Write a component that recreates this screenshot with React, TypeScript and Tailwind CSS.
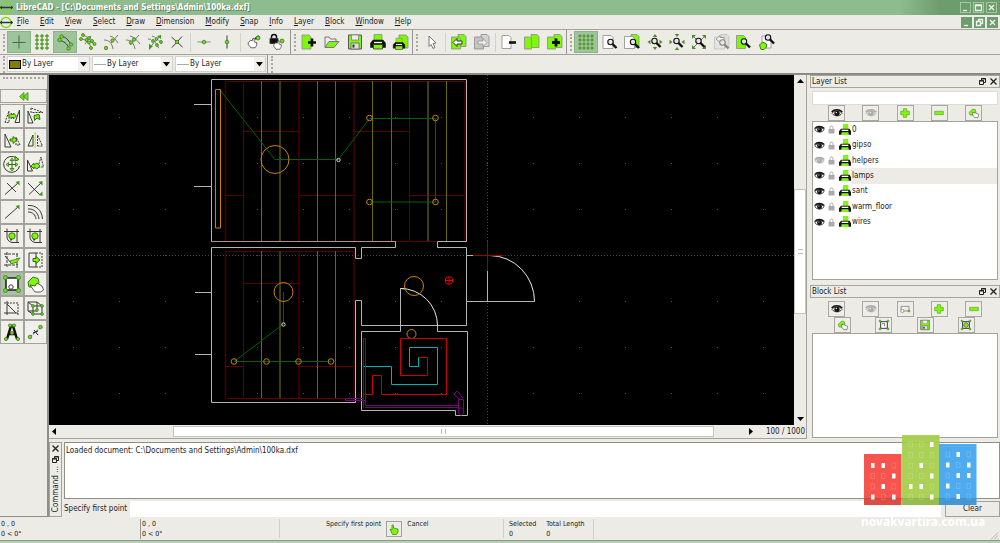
import type { ReactNode } from "react";

const G = "#7ff60a";
const D = "#3a3a3a";

/* ---------- small drawing helpers ---------- */

function Svg({ children, size = 18 }: { children: ReactNode; size?: number }) {
  return (
    <svg width={size} height={size} viewBox="0 0 18 18" fill="none" stroke={D} strokeWidth="1" aria-hidden="true" className="shrink-0">
      {children}
    </svg>
  );
}

function Nodes({ at, r = 1.5 }: { at: number[][]; r?: number }) {
  return (
    <g fill="#74d81c" stroke="#3f7a22" strokeWidth="0.8">
      {at.map(([x, y]) => (
        <circle key={`${x}-${y}`} cx={x} cy={y} r={r} />
      ))}
    </g>
  );
}

function Lens({ x, y }: { x: number; y: number }) {
  return (
    <g stroke="#111">
      <circle cx={x} cy={y} r="2.7" fill="#e6e6e6" strokeWidth="1.1" />
      <path d={`M${x + 2} ${y + 2}l4 4`} strokeWidth="2.4" />
    </g>
  );
}

function Page({ x, y, w = 8, h = 12, fill = "#fff" }: { x: number; y: number; w?: number; h?: number; fill?: string }) {
  return <path d={`M${x} ${y}h${w - 2}l2 2v${h - 2}h${-w}z`} fill={fill} stroke="#8c8c8c" strokeWidth="0.8" />;
}

const dots3x4 = [3, 7, 11, 15].flatMap((y) => [4, 9, 14].map((x) => [x, y]));
const dots4x5 = [3, 7, 11, 15].flatMap((y) => [3, 7, 11, 15].map((x) => [x, y]));

const printer = (
  <>
    <path d="M5 1.500h8v6H5z" fill={G} stroke="#777" strokeWidth="0.600" />
    <path d="M4 7h10l2.500 3v4.500h-3V12h-9v2.500h-3V10z" fill="#111" stroke="#111" strokeWidth="0.500" />
    <path d="M5 9.500h8" stroke="#fff" strokeWidth="1.300" />
    <path d="M4.500 11.500h9v4.500h-9z" fill={G} stroke="#333" strokeWidth="0.800" />
  </>
);

const layerPrinter = (
  <>
    <path d="M6 0h8v8H6z" fill={G} stroke="none" />
    <path d="M3 7h13l2 4v5h-4v-3H4v3H0v-5z" fill="#111" stroke="none" />
    <path d="M4 8.500h10v2H4z" fill="#fff" stroke="none" />
    <path d="M4 12.500h10v4H4z" fill={G} stroke="none" />
  </>
);

const eye = (c: string) => (
  <>
    <path d="M1.5 9.5C4 5 13 4 16.5 9.500C13 14.500 5 14.500 1.500 9.500z" fill={c === "#111" ? "#fff" : "#ddd"} stroke={c} strokeWidth="1.2" />
    <path d="M1 7.500C5 3 12 3 17 7.500" stroke={c} strokeWidth="2.200" />
    <circle cx="9" cy="9.500" r="4" fill={c} stroke="none" />
    <circle cx="8" cy="8.200" r="1" fill="#fff" stroke="none" />
  </>
);

const hand = (
  <path d="M5 9l3-3 1.500 1 1-3 1.500 0v4l3 1v3l-2 3H8l-3-4z" fill="#fff" stroke="#222" strokeWidth="0.8" />
);

const paint = (
  <>
    <path d="M2 8l5-5 4 1 1 4-3 4H3z" fill={G} stroke="#3b7f12" strokeWidth="0.8" />
    <path d="M7 8l4 1 5 2-1 5H10l-3-4z" fill="#fff" stroke="#333" strokeWidth="0.8" />
  </>
);

const plus = <path d="M6.500 2.500h5v4h4v5h-4v4h-5v-4h-4v-5h4z" fill={G} stroke="#5aa52a" />;
const minus = <path d="M2.500 6.500h13v5h-13z" fill={G} stroke="#5aa52a" />;
const floppy = (
  <>
    <path d="M2.500 2h13v14h-13z" fill={G} stroke="#555" />
    <path d="M5.500 2h7v5h-7z" fill="#eee" stroke="#777" strokeWidth="0.700" />
    <path d="M5 10h8v6H5z" fill="#ddd" stroke="#555" strokeWidth="0.700" />
    <path d="M6.500 11.500h2v3h-2z" fill="#333" stroke="none" />
  </>
);
const frame = (
  <>
    <path d="M4 4h10v10H4z" fill="#fff" strokeWidth="1.500" />
    <Nodes at={[[3, 3], [15, 3], [3, 15], [15, 15]]} />
  </>
);

const arrowsOut = (
  <path d="M9 1l2.200 3H6.800zM9 17l2.200-3H6.800zM1.500 9l3-2.200v4.400zM16.500 9l-3-2.200v4.400z" fill="#4c8f1e" stroke="none" />
);
const arrowsIn = (
  <path d="M9 4l2.200-3H6.800zM9 14l2.200 3H6.800zM4.500 9l-3-2.200v4.400zM13.500 9l3-2.200v4.400z" fill="#4c8f1e" stroke="none" />
);
const arrowsDiag = <path d="M2 2h4L2 6zM16 2v4l-4-4zM2 16v-4l4 4zM16 16h-4l4-4z" fill="#4c8f1e" stroke="none" />;

type Tool = { label: string; icon: ReactNode; on?: boolean };

const snapTools: Tool[] = [
  { label: "Free Snap", on: true, icon: <path d="M9 2.500v13M2.500 9.500h13" stroke="#4a6a48" /> },
  { label: "Snap on grid", icon: <Nodes at={dots3x4} r={1.300} /> },
  {
    label: "Snap on Endpoints",
    on: true,
    icon: (
      <>
        <path d="M5.500 3.500C10 4 12 6.500 14.500 11M3.500 7.500C8 8 11 11 13 15" />
        <Nodes at={[[5.500, 3.500], [3.500, 7], [15, 11.500], [12.500, 15.500]]} r={1.700} />
      </>
    ),
  },
  {
    label: "Snap on Entity",
    icon: (
      <>
        <path d="M3 2c5 1 10 5 12 10M2 6c5 0 9 4 10 9M6 11l6-8" stroke="#777" />
        <Nodes at={[[4, 2], [2, 6], [7.500, 7], [10, 5], [10, 9.500], [13, 8], [15.500, 11], [12, 15]]} />
      </>
    ),
  },
  {
    label: "Snap Center",
    icon: (
      <>
        <path d="M2 7c5 0 8 3 9 9M8 3c4 1 6 4 8 7M9 10l7-8" stroke="#777" />
        <Nodes at={[[4, 15], [10.500, 7.500]]} r={1.700} />
      </>
    ),
  },
  {
    label: "Snap Middle",
    icon: (
      <>
        <path d="M2 7c5 0 8 3 9 9M6 3c4 1 7 4 10 8M6 12l9-10" stroke="#777" />
        <Nodes at={[[10, 6.500], [7, 9.500]]} r={1.700} />
      </>
    ),
  },
  {
    label: "Snap Distance",
    icon: (
      <>
        <path d="M2 6c5 0 9 4 11 10M6 3c4 1 7 4 10 8M6 12l9-10" stroke="#777" strokeDasharray="3 1" />
        <path d="M15 2v4l-4-3zM3 11l4 2-4 4z" fill="#3f9a14" stroke="none" />
        <Nodes at={[[7, 8], [10.500, 6], [11, 12], [15, 9]]} r={1.400} />
      </>
    ),
  },
  {
    label: "Snap Intersection",
    icon: (
      <>
        <path d="M3.500 4l11 10M4 14.500l10-11" />
        <Nodes at={[[9, 9]]} r={1.700} />
      </>
    ),
  },
];
const restrictTools: Tool[] = [
  { label: "Restrict Horizontal", icon: <><path d="M2.500 9h13" stroke="#888" /><Nodes at={[[9, 9]]} r={1.800} /></> },
  { label: "Restrict Vertical", icon: <><path d="M9 2.500v13" /><Nodes at={[[9, 9]]} r={1.800} /></> },
];
const zeroTools: Tool[] = [
  { label: "Set Relative Zero", icon: <><path d="M10 6l4-3" stroke="#222" strokeWidth="2" /><Nodes at={[[13, 5]]} r={2} /><g transform="translate(-1 2) scale(.85)">{hand}</g></> },
  {
    label: "Lock Relative Zero",
    icon: (
      <>
        <path d="M3.500 5V4a2.500 2.500 0 015 0v2" stroke="#111" strokeWidth="1.500" />
        <path d="M2 5.500h8v5H2z" fill="#111" />
        <Nodes at={[[14, 8]]} r={2} />
        <g transform="translate(2 5) scale(.75)">{hand}</g>
      </>
    ),
  },
];
const fileTools: Tool[] = [
  { label: "New", icon: <><Page x={2} y={2} w={9} h={14} fill={G} /><path d="M8 9.500h8M12 5.500v8" stroke="#111" strokeWidth="2.600" /></> },
  { label: "Open", icon: <><path d="M2 14V4h4l1.500 2H13v3" fill="#eee" stroke="#777" /><path d="M2 14.500L6 8.500h10l-5 6z" fill={G} stroke="#777" /></> },
  { label: "Save", icon: floppy },
  { label: "Print", icon: printer },
  { label: "Print Preview", icon: <><Page x={7} y={2} w={9} h={13} fill={G} /><g transform="translate(0 4) scale(.78)">{printer}</g></> },
];
const selectTools: Tool[] = [
  { label: "Selection", icon: <path d="M6 3l7 7-3 .5 2 4-2 1-2-4-2 2z" fill="#fff" stroke="#777" /> },
];
const undoTools: Tool[] = [
  { label: "Undo", icon: <><Page x={8} y={1.500} w={8} h={12} fill={G} /><Page x={1.500} y={4} w={9} h={12} fill={G} /><path d="M3 9.500l4-4v2.500h5v3H7v2.500z" fill="#fff" stroke="#222" strokeWidth="0.900" /></> },
  { label: "Redo", icon: <><Page x={8} y={1.500} w={8} h={12} fill="#d4d4d0" /><Page x={1.500} y={4} w={9} h={12} fill="#c4c4c0" /><path d="M14 9.500l-4-4v2.500H5v3h5v2.500z" fill="#eee" stroke="#999" strokeWidth="0.900" /></> },
];
const clipTools: Tool[] = [
  { label: "Cut", icon: <><Page x={2} y={2.500} w={9} h={13} /><path d="M9 9.500h7" stroke="#111" strokeWidth="2.600" /></> },
  { label: "Copy", icon: <><Page x={8} y={1.500} w={8} h={13} fill={G} /><Page x={1.500} y={4} w={7} h={12} fill={G} /></> },
  { label: "Paste", icon: <><Page x={8} y={1.500} w={8} h={13} fill={G} /><Page x={1.500} y={4} w={8} h={12} fill={G} /><path d="M6 9.500h8M10 5.500v8" stroke="#111" strokeWidth="2.800" /></> },
];
const viewTools: Tool[] = [
  { label: "Grid", on: true, icon: <Nodes at={dots4x5} r={1.100} /> },
  { label: "Redraw", icon: <><Page x={2} y={2.500} w={10} h={13} /><Lens x={9.500} y={9} /></> },
  { label: "Zoom page", icon: <><Page x={8} y={1.500} w={8} h={13} fill={G} /><Page x={1.500} y={3.500} w={10} h={12} /><Lens x={10} y={9} /></> },
  { label: "Zoom in", icon: <>{arrowsOut}<Lens x={8.500} y={8} /></> },
  { label: "Zoom out", icon: <>{arrowsIn}<Lens x={8.500} y={8} /></> },
  { label: "Auto Zoom", icon: <><path d="M3 3l12 12M15 3L3 15" stroke="#777" />{arrowsDiag}<Lens x={8.500} y={8} /></> },
  { label: "Previous View", icon: <g opacity="0.45"><Page x={8} y={1.500} w={8} h={13} fill="#ccc" /><Page x={1.500} y={4} w={10} h={12} fill="#ddd" /><path d="M3 6l4-3.500v2h4v3H7v2z" fill="#fff" /><Lens x={9.500} y={9.500} /></g> },
  { label: "Window Zoom", icon: <><Page x={1.500} y={2.500} w={9} h={13} fill={G} /><Lens x={9} y={8.500} /></> },
  { label: "Zoom Panning", icon: <><Page x={4} y={3} w={9} h={12} /><Lens x={10} y={4.500} /><path d="M1.500 12l3-3 4 2v3l-2.500 2.500h-3z" fill={G} stroke="#3b7f12" /></> },
];

const move = (
  <path d="M6 9l3-3v2l3-2 3 3-3 3-3-2v2z" fill={G} stroke="#2f6a10" strokeWidth="0.900" />
);
const bracket = <path d="M4 1.500V11c1 3 3 4.500 6 4.500M1 4.500h15M14 2v14M9 15.500h7" />;
const bevelGem = (
  <>
    <circle cx="9" cy="9" r="3.200" fill={G} stroke="#2f6a10" strokeWidth="0.900" />
    <path d="M8 12v1.500" stroke="#222" strokeWidth="1.500" />
  </>
);

const modifyTools: Tool[] = [
  { label: "Move / Copy", icon: <><path d="M2 15.500L6 4v11.500z" strokeDasharray="2 1" /><path d="M12 15.500L16.500 3v12.500z" /><path d="M5.500 9l3-3v1.500h2V6l3 3-3 3v-1.500h-2V12z" fill={G} stroke="#2f6a10" strokeWidth="0.900" /></> },
  { label: "Rotate", icon: <><path d="M2 16V4l5 12z" /><path d="M5 1v4.500h12z" strokeDasharray="2 1" /><path d="M8 8.500l5-1 1 5-3-1.500-2.500 2.500z" fill={G} stroke="#2f6a10" /></> },
  { label: "Scale", icon: <><path d="M2 16V3l6 13z" /><path d="M13 14V6l4 8z" strokeDasharray="2 1" /><path d="M7 8h3V5.500L14 9l-4 3.500V10H7z" fill={G} stroke="#2f6a10" strokeWidth="0.900" /></> },
  { label: "Mirror", icon: <><path d="M2 15h5V4z" /><path d="M11.500 15h5l-5-11z" strokeDasharray="2 1" /><path d="M9.200 1v16" stroke={G} /></> },
  { label: "Move and Rotate", icon: <><path d="M13.500 3A8 8 0 1016.500 11" /><path d="M12 1.500l4 3-4 1.500z" fill={G} stroke="#2f6a10" /><path d="M9 4v11M4 9.500h11" stroke="#2f6a10" /><path d="M9 3l2 2.500H7zM9 16l2-2.500H7zM3 9.500L5.500 7.500v4zM15 9.500l-2.500-2v4z" fill={G} stroke="#2f6a10" strokeWidth="0.700" /></> },
  { label: "Rotate Two", icon: <><path d="M1.500 16V5l5 11z" /><path d="M12 12l3-10 2.500 10z" strokeDasharray="2 1" /><g transform="translate(-1 2)">{move}</g></> },
  { label: "Trim", icon: <><path d="M2 15.500L15 4M4 4l9 9" /><path d="M16.500 2v4.500L12.500 3z" fill="#3f9a14" stroke="none" /></> },
  { label: "Trim Two", icon: <><path d="M3 15.500L15 4M2 4l12 12" /><path d="M16.500 2v4.500L12.500 3zM16.500 17v-4.500l-4 3.500z" fill="#3f9a14" stroke="none" /></> },
  { label: "Lengthen", icon: <><path d="M2 15.500L15 4" /><path d="M16.500 2v4.500L12.500 3z" fill="#3f9a14" stroke="none" /></> },
  { label: "Offset", icon: <path d="M2 2.500C10 2 16 7 16.500 16M2 6c6-.5 10 3.500 11 10M2 9c5 0 7.500 3 8 7" /> },
  { label: "Bevel", icon: <>{bracket}{bevelGem}</> },
  { label: "Fillet", icon: <>{bracket}{bevelGem}</> },
  { label: "Divide", icon: <><path d="M1 3h14M4 1v15M1 14h14M14 3v14" strokeDasharray="3 1" /><path d="M2 5l7 8" /><path d="M7 10l10-3-3 4-6 2z" fill={G} stroke="#2f6a10" strokeWidth="0.700" /></> },
  { label: "Stretch", icon: <><path d="M10 2H3v14h7z" /><path d="M10 2h6v14h-6" strokeDasharray="2 1" /><path d="M7 7.500h3v-2l4 3.500-4 3.500v-2H7z" fill={G} stroke="#2f6a10" /></> },
  { label: "Properties", on: true, icon: <><path d="M3 3h12v12H3z" fill="#fff" stroke="#222" strokeWidth="1.600" /><circle cx="8" cy="12" r="2.200" fill="#fff" /><Nodes at={[[2.500, 2.500], [15.500, 2.500], [2.500, 15.500], [15.500, 15.500]]} r={2} /></> },
  { label: "Attributes", icon: <><path d="M2 7l5-5 5 1.500 1 4-4 4.500H3z" fill={G} stroke="#3b7f12" /><path d="M4 10l5 1 2-3 5 3 1.500 4-3 2H9z" fill="#fff" stroke="#333" strokeWidth="0.800" /></> },
  { label: "Explode Text", icon: <><path d="M4 2v14M1 14h14" /><path d="M1 4h14v12" strokeDasharray="2 1" /><path d="M4 5l9 9" /></> },
  { label: "Explode", icon: <><path d="M2 3h9v9H2zM7 7h9v8H7zM2 3l5 4M11 3l5 4M2 12l5 3" /><Nodes at={[[7, 7], [16, 7], [7, 15], [16, 15], [11, 11]]} r={1.400} /></> },
  { label: "Edit Text", icon: <><path d="M4 16L8 3h2l4 13M6 11h6" stroke="#111" strokeWidth="2.500" /><Nodes at={[[7, 2.500], [11, 2.500], [3, 16], [15, 16], [9, 10]]} r={1.600} /></> },
  { label: "Block explode", icon: <><path d="M4 14l10-9" stroke="#555" strokeDasharray="3 1" /><path d="M8 7l4 5M7 10l5-2" stroke="#222" /><Nodes at={[[4, 14], [14.500, 4]]} r={1.800} /></> },
];

const menus = ["File", "Edit", "View", "Select", "Draw", "Dimension", "Modify", "Snap", "Info", "Layer", "Block", "Window", "Help"];
const layers = ["0", "gipso", "helpers", "lamps", "sant", "warm_floor", "wires"];

/* ---------- widgets ---------- */

function ToolGroup({ tools, className }: { tools: Tool[]; className: string }) {
  return (
    <div className={`flex h-[22px] ${className}`}>
      {tools.map((t) => (
        <button
          key={t.label}
          aria-label={t.label}
          className={`flex min-w-0 flex-1 items-center justify-center ${t.on ? "border border-[#8db588] bg-[#9dc49a]" : ""}`}
        >
          <Svg>{t.icon}</Svg>
        </button>
      ))}
    </div>
  );
}

function Handle() {
  return <div className="mr-[2px] ml-[3px] h-[17px] shrink-0 border-l-2 border-dotted border-[#a9a8a2]" />;
}

function Sep() {
  return <div className="mx-[2px] h-[19px] w-px shrink-0 bg-[#d3d2cb]" />;
}

function LogoMark() {
  return (
    <svg width="13" height="13" viewBox="0 0 13 13" aria-hidden="true" className="shrink-0">
      <circle cx="6" cy="6.500" r="5" fill="none" stroke="#7ddc1e" strokeWidth="1.500" />
      <path d="M0 6.500h13" stroke="#334" strokeWidth="1.500" />
      <path d="M1.500 5v3M11.500 5v3" stroke="#334" />
    </svg>
  );
}

function WinButtons({ solid }: { solid?: boolean }) {
  const glyphs = [
    { label: "Minimize", d: "M3 8.500h4" },
    solid ? { label: "Restore", d: "M4.500 4V2.500h4v4H7M2.500 4.500h4v4h-4z" } : { label: "Maximize", d: "M2.500 3h6v5.500h-6zM2.500 3.500h6" },
    { label: "Close", d: "M3 3l5 5M8 3l-5 5" },
  ];
  return (
    <div className="flex gap-[2px]">
      {glyphs.map((g) => (
        <button key={g.label} aria-label={g.label} className={`h-[11px] w-[11px] ${solid ? "bg-[#6d9c6d]" : "outline outline-1 -outline-offset-1 outline-[#a3c7a3]"}`}>
          <svg width="11" height="11" viewBox="0 0 11 11" fill="none" stroke="#f2f7f0" strokeWidth="1.300" aria-hidden="true">
            <path d={g.d} />
          </svg>
        </button>
      ))}
    </div>
  );
}

function DockButtons() {
  return (
    <>
      <button aria-label="Float">
        <svg width="9" height="9" viewBox="0 0 9 9" fill="none" stroke="#222" aria-hidden="true">
          <path d="M3.500 3V1.500h4v4H6M1.500 3.500h4v4h-4zM3 2h5M1 4h5" />
        </svg>
      </button>
      <button aria-label="Close">
        <svg width="9" height="9" viewBox="0 0 9 9" stroke="#222" strokeWidth="1.300" aria-hidden="true">
          <path d="M1.500 1.500l6 6M7.500 1.500l-6 6" />
        </svg>
      </button>
    </>
  );
}

function Combo({ id, label, swatch, className }: { id: string; label: string; swatch?: boolean; className: string }) {
  return (
    <label htmlFor={id} className={`flex h-[16px] items-center border border-[#d2d1ca] bg-white pl-px ${className}`}>
      {swatch ? <span className="h-[9px] w-[12px] border border-black bg-[#808000]" /> : <span className="h-px w-[12px] bg-[#aaa]" />}
      <select id={id} aria-label={label} className="h-[14px] min-w-0 flex-1 appearance-none bg-transparent pl-px">
        <option>By Layer</option>
      </select>
      <span className="flex h-[14px] w-[11px] items-center justify-center bg-[#f1f0ec]">
        <svg width="7" height="5" viewBox="0 0 7 5" aria-hidden="true">
          <path d="M0 0h7L3.500 4.500z" />
        </svg>
      </span>
    </label>
  );
}

function PanelButton({ label, children }: { label: string; children: ReactNode }) {
  return (
    <button aria-label={label} className="flex h-[16px] w-[17px] items-center justify-center border border-[#a8a8a2] bg-[#eeede8]">
      <Svg size={12}>{children}</Svg>
    </button>
  );
}

function DockTitle({ children }: { children: ReactNode }) {
  return (
    <div className="flex h-[13px] items-center gap-[2px] border border-[#a6a6a0] px-px">
      <h2 className="flex-1">{children}</h2>
      <DockButtons />
    </div>
  );
}

/* ---------- drawing ---------- */

const gridX = Array.from({ length: 16 }, (_, i) => 73 + i * 46);
const gridY = Array.from({ length: 7 }, (_, i) => 117 + i * 46);

function Drawing() {
  return (
    <svg viewBox="49 75 745 350" preserveAspectRatio="xMinYMin slice" className="block min-h-[350px] w-full flex-1 bg-black" fill="none" role="img" aria-label="Floor plan">
      <g fill="#555">
        {gridX.map((x) => gridY.map((y) => <rect key={`${x}-${y}`} x={x} y={y} width="1" height="1" />))}
      </g>
      <path d="M49 255.500H794M487.500 75V425" stroke="#484848" strokeDasharray="1 2" />
      <g stroke="#5c0000">
        <path d="M225.500 81.500H465M243.500 131.500H299M354 131.500H409.500M225.500 195.500H243.500M299 195.500H354M409.500 195.500H465M243.500 81V241M409.500 81V241M225.500 251.500H355M225.500 398.500H355M243.500 251V398M243.500 283.500H299M225.500 366.500H243.500M299 366.500H354M395 241.500H437" />
        <path d="M225.500 81V241M299 81V241M354 81V241M465 81V241M225.500 251V398M299 251V398M354 251V398" stroke="#4a0000" strokeWidth="1.500" />
      </g>
      <path d="M261.500 81V241M317.500 81V241M335.500 81V241M372.500 81V241M391.500 81V241M446.500 81V241M261.500 251V398M317.500 251V398M335.500 251V398" stroke="#6a6a00" />
      <path d="M280 81V241M428 81V241M280 251V398" stroke="#3f3f00" strokeWidth="2" />
      <g stroke="#b5b5b5">
        <path d="M211.500 241.500V79.500H466.500V241.500H437.500V247.500H466.500V325.500H361.500V300.500H355.500V402.500H211.500V247.500H355.500V258.500H361.500V247.500H395.500V241.500H211.500" />
        <path d="M406 288.500H400.500V331.500H361.500V410.500H455.500V415.500H467.500V331.500H437.500V325.500M466.500 255.500H474M487.500 271V301.500M466.500 301.500H534.500M194 104.500H211M194 186.500H211M195 292.500H212M195 354.500H212" />
        <path d="M400.500 288.500A37 37 0 01437.500 325.500M490 255.500A45 46 0 01534.500 301.500" stroke="#e8e8e8" />
      </g>
      <path d="M212 241.500H395" stroke="#b98f8f" />
      <path d="M473 255.500H503M487.500 241V271" stroke="#a00000" />
      <path d="M220 90L275 159.500H338.500L369.500 118.500H435.500V202H369.500M283.500 292V324L234 361.500H331" stroke="#006400" />
      <g stroke="#c88400">
        <path d="M215.500 89.500H220.500V228H215.500z" />
        <circle cx="275" cy="159.500" r="14" />
        <circle cx="283.500" cy="292" r="9.500" />
        <circle cx="414" cy="286" r="9.500" />
        <circle cx="411.500" cy="334" r="4.500" />
        {[[369.500, 118], [435.500, 118], [369.500, 202], [435.500, 202], [234, 361.500], [266.500, 361.500], [298.500, 361.500], [331, 361.500]].map(([x, y]) => (
          <circle key={`${x}-${y}`} cx={x} cy={y} r="2.800" />
        ))}
      </g>
      <g stroke="#ddd">
        <circle cx="338.500" cy="160" r="1.700" />
        <circle cx="283.500" cy="324.500" r="1.700" />
      </g>
      <g stroke="#e00000">
        <circle cx="449" cy="280.500" r="3.800" />
        <path d="M445 280.500H453M449 276.500V284.500" />
      </g>
      <path d="M364.500 394.500H372.500V375.500H381.500V394.500H446.500V338.500H400.500V375.500H427.500V357.500H418.500" stroke="#c80000" />
      <path d="M418.500 357.500V366.500H409.500V347.500H437.500V384.500H391.500V366.500H364" stroke="#00b4b4" />
      <path d="M363.500 408V338.500H365.500V405.500H458.500M365 407.500H458M345 398.500H363.500M345.500 398V400.500H365M458.500 399.500H463.500V413L461 415.500L458.500 413zM459 399L454 394L457 391L463 398M458.500 409.500L461 407.500L463.500 409.500" stroke="#7a007e" />
    </svg>
  );
}

/* ---------- watermark ---------- */

const towers = [
  { x: 0, y: 19, h: 51, fill: "#f5473f", lit: ["110", "001", "010", "101"], top: 9 },
  { x: 38, y: 0, h: 70, fill: "#a5cf4a", lit: ["001", "000", "010", "001", "110", "001"], top: 7 },
  { x: 75, y: 9, h: 61, fill: "#42a5ee", lit: ["010", "101", "011", "100", "010"], top: 8 },
];

function Watermark() {
  return (
    <div className="pointer-events-none absolute right-[17px] bottom-[14px] flex w-[122px] flex-col">
      <svg viewBox="0 0 113 71" className="ml-[3px] w-[113px]" aria-hidden="true">
        {towers.map((t) => (
          <g key={t.x}>
            <rect x={t.x} y={t.y} width="37.500" height={t.h} fill={t.fill} opacity="0.93" />
            <rect x={t.x} y="63" width="37.500" height="7" fill="#000" opacity="0.1" />
            {t.lit.map((row, r) =>
              row.split("").map((v, c) => (
                <rect
                  key={`${r}-${c}`}
                  x={t.x + 7 + c * 10.500}
                  y={t.y + t.top + r * 10.500}
                  width="3.500"
                  height="5"
                  fill={v === "1" ? "#fff" : "none"}
                  stroke={v === "1" ? "none" : "#fff"}
                  strokeOpacity="0.2"
                  strokeWidth="0.800"
                />
              )),
            )}
          </g>
        ))}
      </svg>
      <p className="mt-[8px] whitespace-nowrap font-['Noto_Sans',sans-serif] text-[12px] leading-[15px] font-bold text-white">novakvartira.com.ua</p>
    </div>
  );
}

/* ---------- page ---------- */

export default function App() {
  return (
    <div className="relative flex min-h-screen flex-col bg-[#ecebe5] font-['DejaVu_Sans_Condensed','DejaVu_Sans',sans-serif] text-[8px] leading-[10px] text-[#1c1c1c]">
      <header>
        <div className="flex h-[15px] items-center gap-[3px] bg-linear-to-r from-[#8fbc8f] from-90% to-[#6d9c6d] to-94% pr-[3px] text-white">
          <LogoMark />
          <h1 className="flex-1 text-[8px] font-bold [text-shadow:1px_1px_0_#5d805d]">{"LibreCAD - [C:\\Documents and Settings\\Admin\\100ka.dxf]"}</h1>
          <WinButtons />
        </div>
        <div className="flex h-[15px] items-center border-b border-[#a3a29c] pr-[2px]">
          <LogoMark />
          <nav className="flex flex-1 gap-[11px] pl-[4px]">
            {menus.map((m) => (
              <button key={m}>
                <span className="underline">{m[0]}</span>
                {m.slice(1)}
              </button>
            ))}
          </nav>
          <WinButtons solid />
        </div>
      </header>

      <div className="flex h-[25px] items-center border-b border-[#a3a29c]">
        <div className="flex h-full items-center border-r border-[#96958f] pr-[2px]">
          <Handle />
          <ToolGroup tools={snapTools} className="w-[181px]" />
          <Sep />
          <ToolGroup tools={restrictTools} className="w-[45px]" />
          <Sep />
          <ToolGroup tools={zeroTools} className="w-[45px]" />
        </div>
        <div className="flex h-full items-center border-r border-[#96958f]">
          <Handle />
          <ToolGroup tools={fileTools} className="w-[114px]" />
        </div>
        <div className="flex h-full items-center border-r border-[#96958f]">
          <Handle />
          <ToolGroup tools={selectTools} className="w-[23px]" />
          <Sep />
          <ToolGroup tools={undoTools} className="w-[45px]" />
          <Sep />
          <ToolGroup tools={clipTools} className="w-[68px]" />
        </div>
        <Handle />
        <ToolGroup tools={viewTools} className="w-[204px]" />
      </div>

      <div className="flex h-[20px] items-center border-b-2 border-[#8a8a85]">
        <Handle />
        <div className="flex h-full items-center gap-[2px] border-r border-[#96958f] pr-px">
          <Combo id="pen-color" label="Color" swatch className="w-[83px]" />
          <Combo id="pen-width" label="Width" className="w-[81px]" />
          <Combo id="pen-type" label="Line type" className="w-[91px]" />
        </div>
        <Handle />
      </div>

      <div className="flex flex-1">
        <aside className="w-[49px] border-r-2 border-b border-[#8f8f8a]">
          <div className="mx-[3px] mt-[2px] mb-[10px] border-t-2 border-dotted border-[#a9a8a2]" />
          <button aria-label="Back" className="flex h-[14px] w-full items-center justify-center border border-[#a3a39d] bg-[#f0efea]">
            <svg width="10" height="9" viewBox="0 0 10 9" fill="#6ee010" stroke="#3f8f14" strokeWidth="0.800" aria-hidden="true">
              <path d="M5 .5L.5 4.500 5 8.500zM9 .5L4.500 4.500 9 8.500z" />
            </svg>
          </button>
          <div className="mt-px grid grid-cols-2">
            {modifyTools.map((t) => (
              <button
                key={t.label}
                aria-label={t.label}
                className={`flex h-[24px] items-center justify-center border border-[#a3a39d] ${t.on ? "bg-[#a9bfa6]" : "bg-[#f0efea]"}`}
              >
                <Svg>{t.icon}</Svg>
              </button>
            ))}
          </div>
        </aside>

        <div className="flex min-w-0 flex-1 flex-col">
          <div className="flex flex-1">
            <main className="flex min-w-0 flex-1 flex-col border-r border-b border-[#a3a39d]">
              <div className="flex flex-1">
                <Drawing />
                <div className="flex w-[12px] shrink-0 flex-col items-center py-[4px]">
                  <svg width="7" height="4" viewBox="0 0 7 4" aria-hidden="true"><path d="M0 4h7L3.500 0z" /></svg>
                  <div className="grow-107" />
                  <div className="flex w-full grow-118 items-center justify-center border border-[#c4c4be] bg-white">
                    <span className="h-[5px] w-[5px] border-y border-[#bbb]" />
                  </div>
                  <div className="grow-104" />
                  <svg width="7" height="4" viewBox="0 0 7 4" aria-hidden="true"><path d="M0 0h7L3.500 4z" /></svg>
                </div>
              </div>
              <div className="flex h-[13px] items-center pl-[3px]">
                <svg width="4" height="7" viewBox="0 0 4 7" aria-hidden="true"><path d="M4 0v7L0 3.500z" /></svg>
                <div className="grow-118" />
                <div className="flex h-[11px] grow-540 items-center justify-center border border-[#c4c4be] bg-white">
                  <span className="h-[5px] w-[5px] border-x border-[#bbb]" />
                </div>
                <div className="grow-35" />
                <svg width="4" height="7" viewBox="0 0 4 7" aria-hidden="true"><path d="M0 0v7l4-3.500z" /></svg>
                <span className="ml-[13px] pr-px">100 / 1000</span>
              </div>
            </main>

            <aside className="flex w-[193px] shrink-0 flex-col pl-[3px]">
              <section className="flex flex-col">
                <DockTitle>Layer List</DockTitle>
                <input aria-label="Filter layers" className="mx-[2px] mt-[3px] h-[14px] border border-[#dcdbd5] bg-white" />
                <div className="flex justify-between px-[18px]">
                  <PanelButton label="Show all layers">{eye("#111")}</PanelButton>
                  <PanelButton label="Hide all layers">{eye("#aaa")}</PanelButton>
                  <PanelButton label="Add layer">{plus}</PanelButton>
                  <PanelButton label="Remove layer">{minus}</PanelButton>
                  <PanelButton label="Edit layer">{paint}</PanelButton>
                </div>
                <div className="mx-[2px] h-[159px] border border-[#a3a39d] bg-white">
                  <ul className="grid h-[108px]">
                    {layers.map((l) => (
                      <li key={l} className="flex items-center pl-px">
                        <Svg size={11}>{eye(l === "helpers" ? "#aaa" : "#111")}</Svg>
                        <svg width="7" height="9" viewBox="0 0 7 9" className="mx-[3px]" aria-hidden="true">
                          <path d="M2 4V2.500a1.500 1.500 0 013 0V4" fill="none" stroke="#aaa" />
                          <path d="M.5 4h6v4.500h-6z" fill="#aaa" />
                        </svg>
                        <span className="ml-px"><Svg size={12}>{layerPrinter}</Svg></span>
                        <span className={`flex h-full flex-1 items-center pl-px ${l === "lamps" ? "bg-[#ecebe5]" : ""}`}>{l}</span>
                      </li>
                    ))}
                  </ul>
                </div>
              </section>
              <section className="mt-[5px] flex flex-1 flex-col">
                <DockTitle>Block List</DockTitle>
                <div className="mt-[3px] flex justify-between px-[18px]">
                  <PanelButton label="Show all blocks">{eye("#111")}</PanelButton>
                  <PanelButton label="Hide all blocks">{eye("#aaa")}</PanelButton>
                  <PanelButton label="Create block">
                    <path d="M3 11V5h12v7H7" stroke="#888" strokeWidth="1.300" />
                    <circle cx="5" cy="12" r="2.500" stroke="#888" />
                    <Nodes at={[[15, 12]]} />
                  </PanelButton>
                  <PanelButton label="Add block">{plus}</PanelButton>
                  <PanelButton label="Remove block">{minus}</PanelButton>
                </div>
                <div className="flex justify-between pr-[25px] pl-[24px]">
                  <PanelButton label="Rename block">{paint}</PanelButton>
                  <PanelButton label="Edit block">{frame}<path d="M6 7h4v4" /></PanelButton>
                  <PanelButton label="Save block">{floppy}</PanelButton>
                  <PanelButton label="Insert block">{frame}<circle cx="9" cy="9" r="3.500" fill={G} /></PanelButton>
                </div>
                <div className="mx-[2px] mb-px flex-1 border border-[#a3a39d] bg-white" />
              </section>
            </aside>
          </div>

          <section className="mt-[3px] flex h-[75px]">
            <div className="flex w-[13px] flex-col items-center border border-[#a3a39d] pt-px">
              <div className="flex flex-col-reverse gap-[2px]"><DockButtons /></div>
              <h2 className="mt-[2px] rotate-180 whitespace-nowrap [writing-mode:vertical-rl]">Command ...</h2>
            </div>
            <div className="ml-[2px] flex min-w-0 flex-1 flex-col">
              <div className="h-[57px] border border-[#8f8f8a] bg-white px-px pt-[3px]">{"Loaded document: C:\\Documents and Settings\\Admin\\100ka.dxf"}</div>
              <div className="flex flex-1 items-center pt-[2px]">
                <label htmlFor="command" className="w-[66px]">Specify first point</label>
                <input id="command" className="h-full min-w-0 flex-1 bg-white" />
                <button className="ml-[4px] h-full w-[55px] border border-[#a3a39d] bg-[#ecebe5]">Clear</button>
              </div>
            </div>
          </section>
        </div>
      </div>

      <footer className="border-b-2 border-[#b9cfb4]">
        <div className="flex h-[24px] items-center border-b border-[#8b9a88] text-[7px]">
          <p className="w-[140px] pl-px whitespace-pre-line">{"0 , 0\n0 < 0°"}</p>
          <p className="w-[139px] border-l border-[#999] pl-px whitespace-pre-line">{"0 , 0\n0 < 0°"}</p>
          <div className="flex h-[19px] w-[225px] gap-[5px] border-x border-[#d0cfc8] pl-[46px]">
            <span className="whitespace-nowrap">Specify first point</span>
            <button aria-label="Left mouse button" className="mt-[2px] flex h-[16px] w-[16px] items-center justify-center border border-[#a3a39d]">
              <svg width="10" height="11" viewBox="0 0 10 11" aria-hidden="true">
                <path d="M1 5l2 1V1.500C3 .5 4.500.5 4.500 1.500V4L9 5v3L7.500 10.500h-4z" fill={G} stroke="#3f8f14" strokeWidth="0.800" />
              </svg>
            </button>
            <span>Cancel</span>
          </div>
          <div className="flex gap-[10px] border-r border-[#d0cfc8] pr-[8px] pl-[5px]">
            <p>Selected<br />0</p>
            <p>Total Length<br />0</p>
          </div>
          <svg width="9" height="9" viewBox="0 0 9 9" stroke="#b5b4ad" className="mt-auto mr-px ml-auto" aria-hidden="true">
            <path d="M1 8.500l7-7M4 8.500l4-4M7 8.500l1-1" />
          </svg>
        </div>
      </footer>
      <Watermark />
    </div>
  );
}
